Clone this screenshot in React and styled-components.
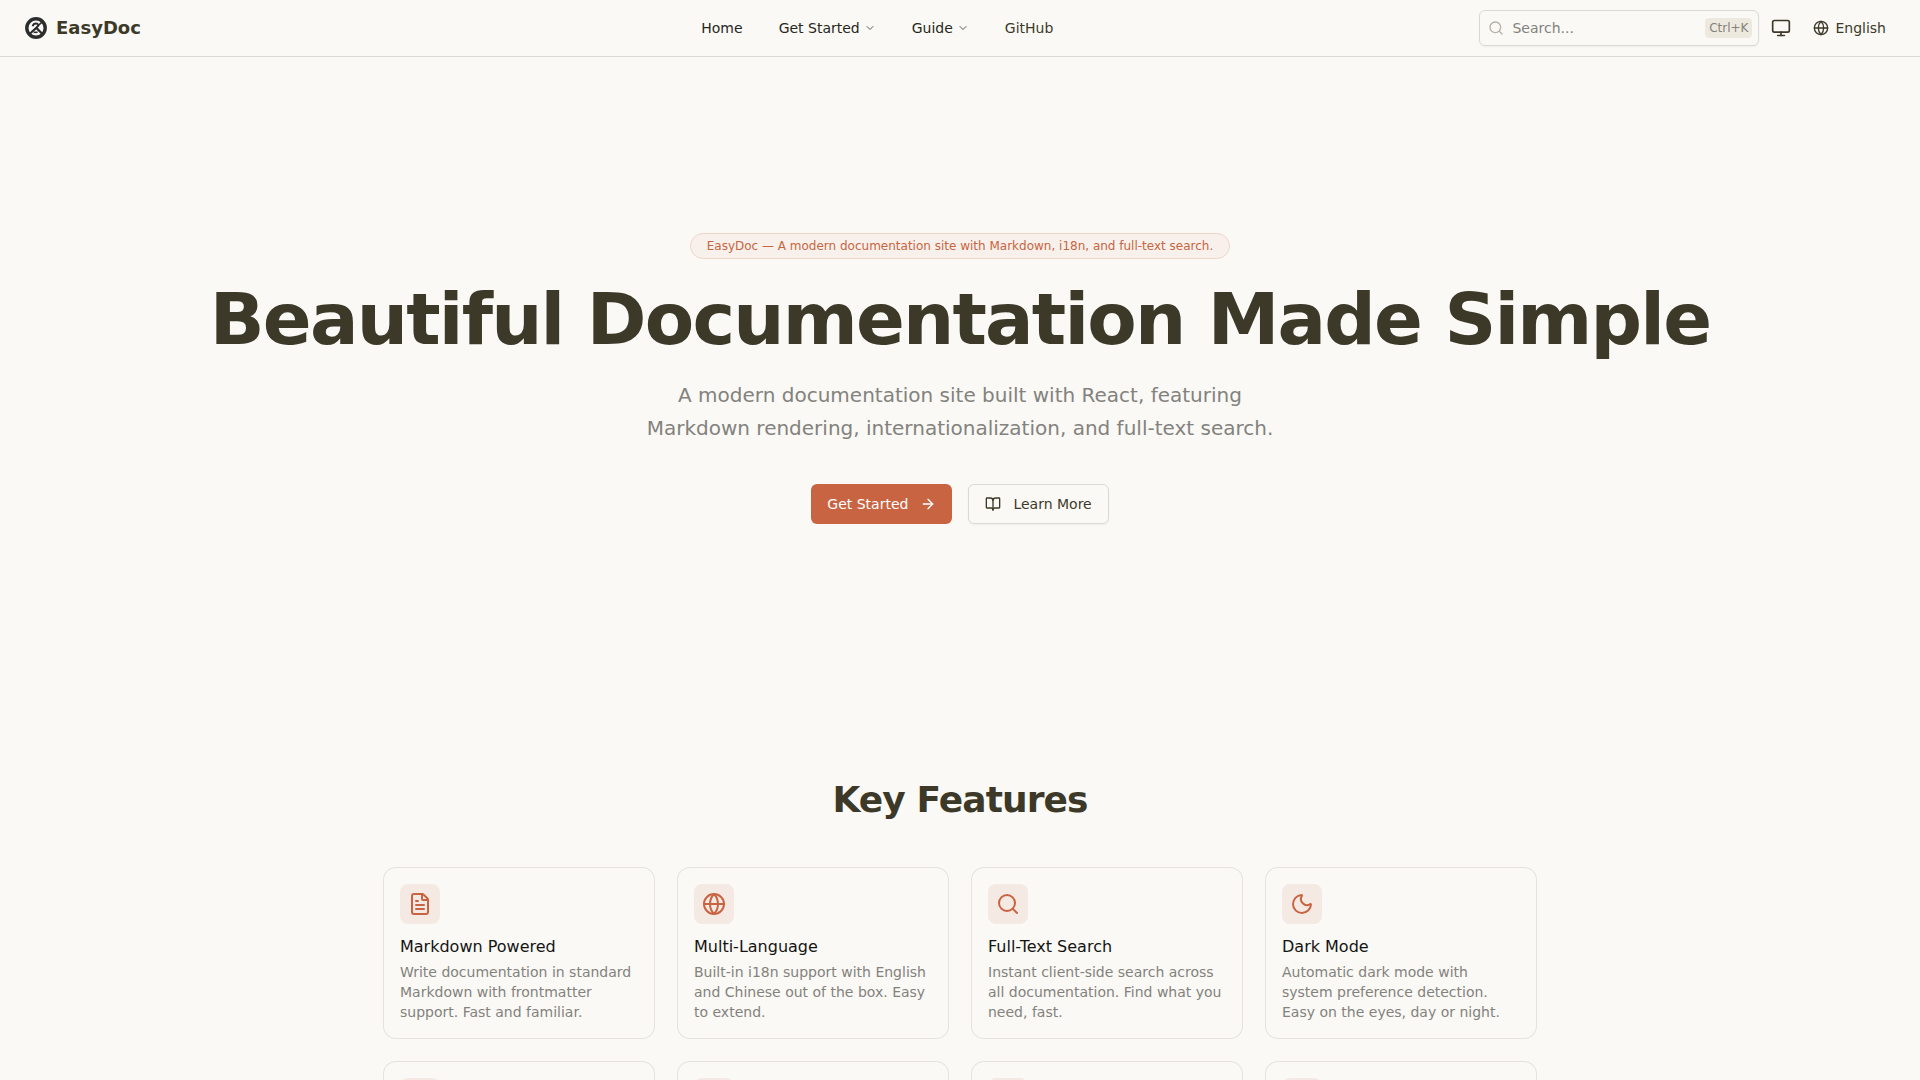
import styled, { createGlobalStyle, css } from "styled-components";
import {
  ArrowRight,
  BookOpen,
  ChevronDown,
  FileText,
  Globe,
  Monitor,
  Moon,
  Search,
} from "lucide-react";

const GlobalStyle = createGlobalStyle`
  * {
    box-sizing: border-box;
  }

  body {
    margin: 0;
    background: #faf9f5;
    color: #3d3929;
    font-family: "DejaVu Sans", sans-serif;
    font-size: 14px;
    line-height: 20px;
  }

  button,
  input {
    font: inherit;
    color: inherit;
  }

  h1,
  h2,
  h3,
  p {
    margin: 0;
  }
`;

const Page = styled.div`
  height: 100vh;
  overflow-y: auto;
  scrollbar-width: none;
`;

const Header = styled.header`
  position: sticky;
  top: 0;
  z-index: 10;
  display: grid;
  grid-template-columns: 4fr auto 5fr;
  align-items: center;
  min-height: 57px;
  padding: 0 24px;
  background: #faf9f5;
  border-bottom: 1px solid #dad9d4;
`;

const Brand = styled.a`
  display: flex;
  align-items: center;
  gap: 8px;
  justify-self: start;
  color: #3d3929;
  font-size: 18px;
  font-weight: 700;
  line-height: 28px;
  text-decoration: none;
`;

const Nav = styled.nav`
  display: flex;
  gap: 4px;
`;

const navItem = css`
  display: flex;
  align-items: center;
  gap: 4px;
  height: 36px;
  padding: 0 16px;
  border: 0;
  border-radius: 6px;
  background: none;
  text-decoration: none;
  cursor: pointer;

  &:hover {
    background: #e9e6dc;
  }
`;

const NavLink = styled.a`
  ${navItem}
  color: ${(props) => (props.$external ? "#3d3929" : "#28261b")};
`;

const NavButton = styled.button`
  ${navItem}
  color: #28261b;
`;

const Tools = styled.div`
  display: flex;
  align-items: center;
  justify-self: end;
  gap: 4px;
`;

const SearchBox = styled.label`
  display: flex;
  align-items: center;
  gap: 8px;
  width: 280px;
  height: 36px;
  padding: 0 6px 0 8px;
  border: 1px solid #dad9d4;
  border-radius: 6px;
  color: #b4b2a7;
  box-shadow: 0 1px 2px rgba(0, 0, 0, 0.05);
`;

const SearchInput = styled.input`
  flex: 1;
  min-width: 0;
  padding: 0;
  border: 0;
  outline: 0;
  background: none;
  color: #3d3929;

  &::placeholder {
    color: #83827d;
    opacity: 1;
  }
`;

const Kbd = styled.kbd`
  padding: 0 4px;
  border-radius: 4px;
  background: #ede9de;
  color: #83827d;
  font-family: inherit;
  font-size: 12px;
`;

const ToolButton = styled.button`
  display: flex;
  align-items: center;
  justify-content: center;
  gap: 6px;
  height: 36px;
  padding: 0 ${(props) => (props.$icon ? "8px" : "10px")};
  border: 0;
  border-radius: 6px;
  background: none;
  cursor: pointer;

  &:hover {
    background: #e9e6dc;
  }
`;

const Hero = styled.section`
  display: flex;
  flex-direction: column;
  align-items: center;
  padding: 176px 24px;
  text-align: center;
`;

const Badge = styled.span`
  padding: 4px 16px;
  border: 1px solid #f0d5cb;
  border-radius: 13px;
  background: #f8f1eb;
  color: #c96442;
  font-size: 12px;
  line-height: 16px;
`;

const HeroTitle = styled.h1`
  margin-top: 24px;
  font-size: 72px;
  font-weight: 700;
  line-height: 72px;
  letter-spacing: -0.025em;
`;

const HeroText = styled.p`
  max-width: 672px;
  margin-top: 24px;
  color: #83827d;
  font-size: 20px;
  line-height: 33px;
`;

const Actions = styled.div`
  display: flex;
  flex-wrap: wrap;
  justify-content: center;
  gap: 16px;
  margin-top: 39px;
`;

const ActionLink = styled.a`
  display: flex;
  align-items: center;
  gap: 12px;
  height: 40px;
  padding: 0 16px;
  border-radius: 6px;
  text-decoration: none;
  ${(props) =>
    props.$primary
      ? css`
          background: #c96442;
          color: #fff;
        `
      : css`
          border: 1px solid #dad9d4;
          color: #3d3929;
          box-shadow: 0 1px 2px rgba(0, 0, 0, 0.05);
        `}
`;

const Features = styled.section`
  max-width: 1200px;
  margin: 0 auto;
  padding: 80px 24px;
`;

const SectionTitle = styled.h2`
  font-size: 36px;
  font-weight: 700;
  line-height: 40px;
  letter-spacing: -0.025em;
  text-align: center;
`;

const CardGrid = styled.div`
  display: grid;
  grid-template-columns: repeat(auto-fit, minmax(240px, 1fr));
  gap: 24px;
  margin-top: 48px;
`;

const Card = styled.article`
  padding: 16px;
  border-radius: 12px;
  box-shadow: 0 0 0 1px #e5e3dc;
`;

const IconTile = styled.div`
  display: flex;
  align-items: center;
  justify-content: center;
  width: 40px;
  height: 40px;
  border-radius: 8px;
  background: #f5eae3;
  color: #c96442;
`;

const CardTitle = styled.h3`
  margin-top: 12px;
  color: #141413;
  font-size: 16px;
  font-weight: 400;
  line-height: 22px;
`;

const CardText = styled.p`
  margin-top: 4px;
  color: #83827d;
`;

const features = [
  {
    icon: FileText,
    title: "Markdown Powered",
    text: "Write documentation in standard Markdown with frontmatter support. Fast and familiar.",
  },
  {
    icon: Globe,
    title: "Multi-Language",
    text: "Built-in i18n support with English and Chinese out of the box. Easy to extend.",
  },
  {
    icon: Search,
    title: "Full-Text Search",
    text: "Instant client-side search across all documentation. Find what you need, fast.",
  },
  {
    icon: Moon,
    title: "Dark Mode",
    text: "Automatic dark mode with system preference detection. Easy on the eyes, day or night.",
  },
  {},
  {},
  {},
  {},
];

function LogoMark() {
  return (
    <svg width="24" height="24" viewBox="0 0 24 24" fill="none" aria-hidden="true">
      <circle cx="12" cy="12" r="9.2" stroke="#2b2d2e" strokeWidth="3.4" />
      <path
        d="M8.6 10.2c.5-1.800 1.800-2.700 3.400-2.700 1.800 0 2.500 1.100 2 2.400-.6 1.600-3.600 3.600-7.400 7.200"
        stroke="#2b2d2e"
        strokeWidth="1.9"
      />
      <path d="M5.400 18.200L18.400 5.600" stroke="#2b2d2e" strokeWidth="1.500" />
      <path d="M12.800 12.400l5.400 5.400" stroke="#2b2d2e" strokeWidth="2.200" />
      <path d="M9.600 16.300h4" stroke="#2b2d2e" strokeWidth="1.600" />
    </svg>
  );
}

function FeatureCard({ icon: Icon, title, text }) {
  return (
    <Card>
      <IconTile>{Icon && <Icon size={24} />}</IconTile>
      {title && <CardTitle>{title}</CardTitle>}
      {text && <CardText>{text}</CardText>}
    </Card>
  );
}

function App() {
  return (
    <Page>
      <GlobalStyle />
      <Header>
        <Brand href="#">
          <LogoMark />
          EasyDoc
        </Brand>
        <Nav>
          <NavLink href="#">Home</NavLink>
          <NavButton type="button">
            Get Started
            <ChevronDown size={12} color="#5c594c" />
          </NavButton>
          <NavButton type="button">
            Guide
            <ChevronDown size={12} color="#5c594c" />
          </NavButton>
          <NavLink href="#github" $external>
            GitHub
          </NavLink>
        </Nav>
        <Tools>
          <SearchBox>
            <Search size={16} />
            <SearchInput type="text" placeholder="Search..." aria-label="Search" />
            <Kbd>Ctrl+K</Kbd>
          </SearchBox>
          <ToolButton type="button" aria-label="Theme" $icon>
            <Monitor size={20} />
          </ToolButton>
          <ToolButton type="button">
            <Globe size={16} />
            English
          </ToolButton>
        </Tools>
      </Header>

      <main>
        <Hero>
          <Badge>
            EasyDoc — A modern documentation site with Markdown, i18n, and
            full-text search.
          </Badge>
          <HeroTitle>Beautiful Documentation Made Simple</HeroTitle>
          <HeroText>
            A modern documentation site built with React, featuring Markdown
            rendering, internationalization, and full-text search.
          </HeroText>
          <Actions>
            <ActionLink href="#start" $primary>
              Get Started
              <ArrowRight size={16} />
            </ActionLink>
            <ActionLink href="#learn">
              <BookOpen size={16} />
              Learn More
            </ActionLink>
          </Actions>
        </Hero>

        <Features>
          <SectionTitle>Key Features</SectionTitle>
          <CardGrid>
            {features.map((feature, i) => (
              <FeatureCard key={i} {...feature} />
            ))}
          </CardGrid>
        </Features>
      </main>
    </Page>
  );
}

export default App;
